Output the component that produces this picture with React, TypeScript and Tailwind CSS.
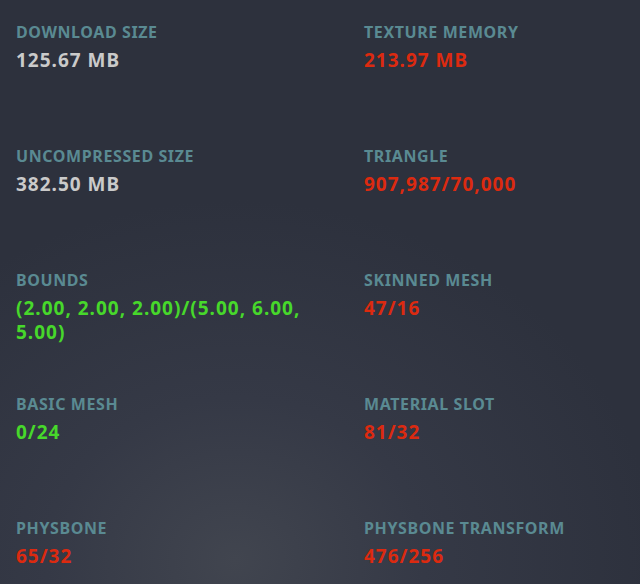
import React from 'react';

type Stat = { label: string; value: string; tone: 'plain' | 'bad' | 'good' };

const stats: Stat[] = [
  { label: 'DOWNLOAD SIZE', value: '125.67 MB', tone: 'plain' },
  { label: 'TEXTURE MEMORY', value: '213.97 MB', tone: 'bad' },
  { label: 'UNCOMPRESSED SIZE', value: '382.50 MB', tone: 'plain' },
  { label: 'TRIANGLE', value: '907,987/70,000', tone: 'bad' },
  { label: 'BOUNDS', value: '(2.00, 2.00, 2.00)/(5.00, 6.00, 5.00)', tone: 'good' },
  { label: 'SKINNED MESH', value: '47/16', tone: 'bad' },
  { label: 'BASIC MESH', value: '0/24', tone: 'good' },
  { label: 'MATERIAL SLOT', value: '81/32', tone: 'bad' },
  { label: 'PHYSBONE', value: '65/32', tone: 'bad' },
  { label: 'PHYSBONE TRANSFORM', value: '476/256', tone: 'bad' },
];

const toneClass = {
  plain: 'text-[#cacaca]',
  bad: 'text-[#dc2a10]',
  good: 'text-[#47d82b]',
};

export default function App() {
  return (
    <div
      className="w-[640px] h-[584px] overflow-hidden bg-[#2d313d] bg-[radial-gradient(ellipse_420px_360px_at_235px_560px,#41454f_0%,#353946_45%,#2d313d_100%)]"
      style={{ fontFamily: '"Noto Sans", "Open Sans", sans-serif' }}
    >
      <div className="grid grid-cols-[304px_1fr] gap-x-11 pl-4">
        {stats.map((s) => (
          <div key={s.label} className="h-[124px] pt-[22px]">
            <div className="text-[16px] leading-5 font-bold text-[#5a8a92] tracking-[0.6px]">{s.label}</div>
            <div className={`mt-[6px] text-[19px] leading-6 font-bold tracking-[1px] ${toneClass[s.tone]}`}>{s.value}</div>
          </div>
        ))}
      </div>
    </div>
  );
}
